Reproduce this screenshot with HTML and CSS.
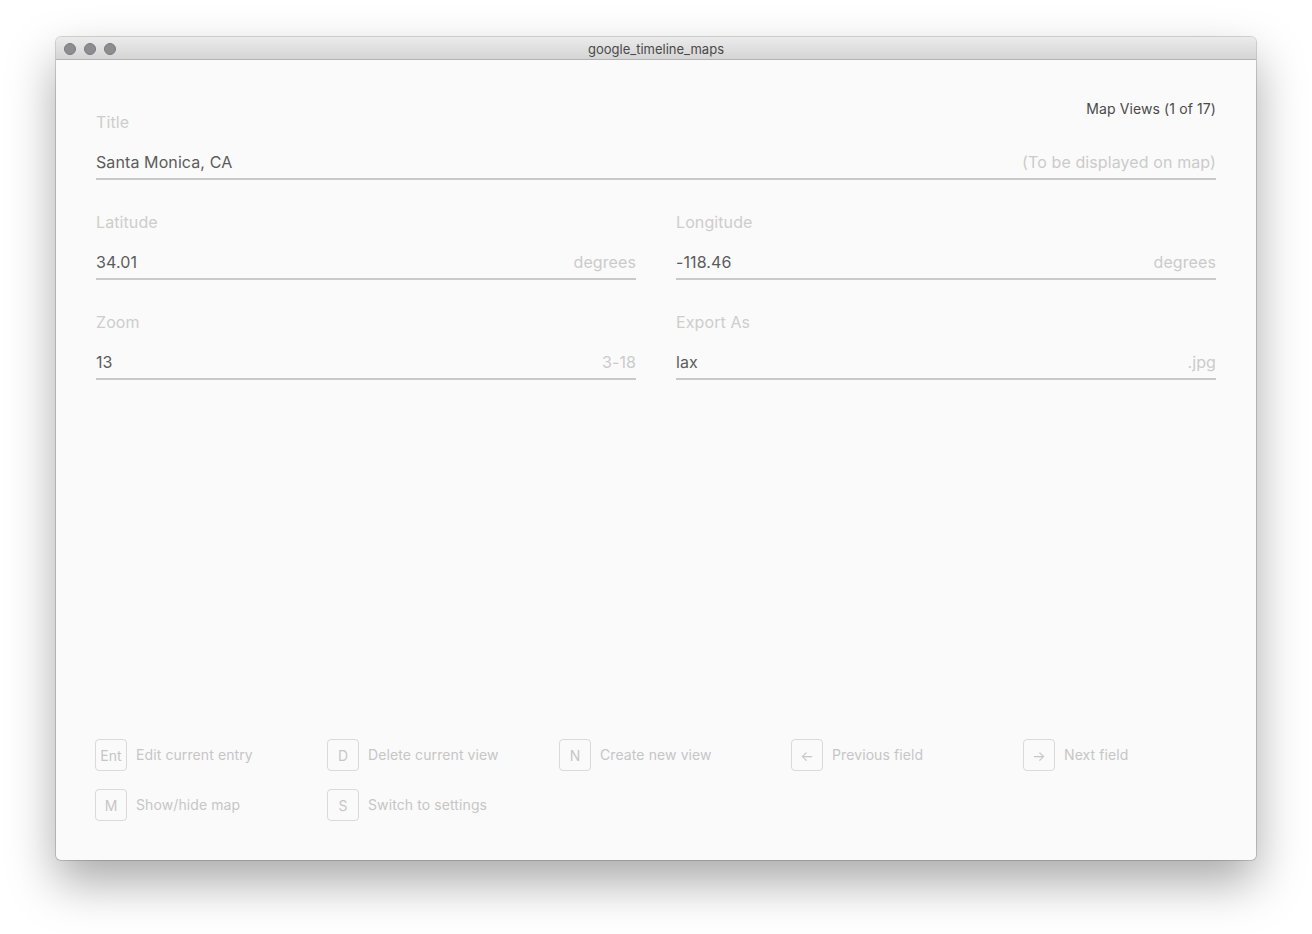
FILE: index.html
```html
<!DOCTYPE html>
<html>
<head>
<meta charset="utf-8">
<link rel="stylesheet" href="styles.css">
</head>
<body>
<div class="desk">
  <div class="window">
    <div class="titlebar">
      <div class="lights"><span></span><span></span><span></span></div>
      <div class="wtitle">google_timeline_maps</div>
    </div>
    <div class="content">
      <div class="form">
        <div class="field full">
          <div class="toprow">
            <div class="label first">Title</div>
            <div class="count">Map Views (1 of 17)</div>
          </div>
          <div class="input"><span class="val">Santa Monica, CA</span><span class="hint">(To be displayed on map)</span></div>
        </div>
        <div class="grid2">
          <div class="field">
            <div class="label">Latitude</div>
            <div class="input"><span class="val">34.01</span><span class="hint">degrees</span></div>
          </div>
          <div class="field">
            <div class="label">Longitude</div>
            <div class="input"><span class="val">-118.46</span><span class="hint">degrees</span></div>
          </div>
          <div class="field">
            <div class="label">Zoom</div>
            <div class="input"><span class="val">13</span><span class="hint">3-18</span></div>
          </div>
          <div class="field">
            <div class="label">Export As</div>
            <div class="input"><span class="val">lax</span><span class="hint">.jpg</span></div>
          </div>
        </div>
      </div>
      <div class="shortcuts">
        <div class="sc"><span class="key">Ent</span><span class="desc">Edit current entry</span></div>
        <div class="sc"><span class="key">D</span><span class="desc">Delete current view</span></div>
        <div class="sc"><span class="key">N</span><span class="desc">Create new view</span></div>
        <div class="sc"><span class="key">&#8592;</span><span class="desc">Previous field</span></div>
        <div class="sc"><span class="key">&#8594;</span><span class="desc">Next field</span></div>
        <div class="sc"><span class="key">M</span><span class="desc">Show/hide map</span></div>
        <div class="sc"><span class="key">S</span><span class="desc">Switch to settings</span></div>
      </div>
    </div>
  </div>
</div>
</body>
</html>
```

FILE: styles.css
```css
* { box-sizing: border-box; }
html, body { margin: 0; padding: 0; background: #ffffff; }
body { font-family: Inter, "Noto Sans", sans-serif; letter-spacing: 0.1px; }
.desk { padding: 37px 56px; height: 934px; }
.window {
  width: 1200px;
  height: 823px;
  border-radius: 5px;
  background: #fafafa;
  box-shadow: 0 0 0 1px rgba(0,0,0,0.16), 0 22px 48px rgba(0,0,0,0.34);
  display: flex;
  flex-direction: column;
  overflow: hidden;
}
.titlebar {
  height: 23px;
  flex: none;
  background: linear-gradient(#ebebeb, #d5d5d5);
  border-bottom: 1px solid #b3b3b3;
  display: flex;
  align-items: center;
  position: relative;
}
.lights { display: flex; gap: 8px; padding-left: 8px; padding-top: 1px; }
.lights span { width: 12px; height: 12px; border-radius: 50%; background: #8d8c90; border: 0.5px solid #7a797d; }
.wtitle {
  position: absolute; left: 0; right: 0; top: 1px; bottom: 0;
  text-align: center; line-height: 23px;
  font-size: 13px; color: #4a4a4a; letter-spacing: 0;
}
.content {
  flex: 1;
  display: flex;
  flex-direction: column;
  padding: 40px 40px 39px 40px;
}
.form { display: flex; flex-direction: column; gap: 32px; }
.toprow { display: flex; justify-content: space-between; align-items: flex-start; }
.count { font-size: 14px; line-height: 18px; color: #4a4a4a; }
.label { font-size: 16px; line-height: 20px; color: #cdcdcd; }
.label.first { padding-top: 12px; }
.input {
  margin-top: 20px;
  display: flex;
  justify-content: space-between;
  font-size: 16px;
  line-height: 20px;
  padding-bottom: 6px;
  border-bottom: 2px solid #c9c9c9;
}
.val { color: #5c5c5c; }
.hint { color: #cbcbcb; }
.grid2 { display: grid; grid-template-columns: 1fr 1fr; column-gap: 40px; row-gap: 32px; }
.shortcuts {
  margin-top: auto;
  display: grid;
  grid-template-columns: repeat(5, 232px);
  row-gap: 18px;
  margin-left: -1px;
}
.sc { display: flex; align-items: center; gap: 9px; }
.key {
  width: 32px; height: 32px;
  border: 1px solid #dadada;
  border-radius: 4px;
  display: flex; align-items: center; justify-content: center;
  font-size: 14px; color: #c6c6c6;
}
.desc { font-size: 14px; color: #c6c6c6; margin-top: -2px; }
```
